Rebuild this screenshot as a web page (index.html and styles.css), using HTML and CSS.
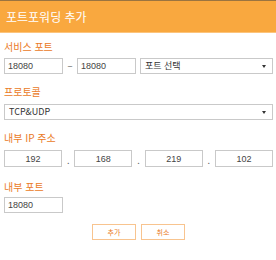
FILE: index.html
```html
<!DOCTYPE html>
<html lang="ko">
<head>
    <meta charset="utf-8"/>
    <title>포트포워딩 추가</title>
    <link rel="stylesheet" href="styles.css">
</head>
<body>
<div class="popup">
    <div class="popup-head">포트포워딩 추가</div>

    <div class="popup-body">
        <div class="label first">서비스 포트</div>
        <div class="row">
            <input class="field port" type="text" value="18080">
            <span class="dash">−</span>
            <input class="field port" type="text" value="18080">
            <div class="select grow">포트 선택<span class="arrow"></span></div>
        </div>

        <div class="label">프로토콜</div>
        <div class="row">
            <div class="select grow">TCP&amp;UDP<span class="arrow"></span></div>
        </div>

        <div class="label">내부 IP 주소</div>
        <div class="row ip">
            <input class="field octet" type="text" value="192">
            <span class="dot">.</span>
            <input class="field octet" type="text" value="168">
            <span class="dot">.</span>
            <input class="field octet" type="text" value="219">
            <span class="dot">.</span>
            <input class="field octet" type="text" value="102">
        </div>

        <div class="label last">내부 포트</div>
        <div class="row">
            <input class="field port" type="text" value="18080">
        </div>

        <div class="buttons">
            <span class="btn">추가</span>
            <span class="btn">취소</span>
        </div>
    </div>
</div>
</body>
</html>
```

FILE: styles.css
```css
body{
    margin: 0;
    padding: 0;
    background: #fff;
    font-family: "Noto Sans CJK KR", "Noto Sans", sans-serif;
}

.popup-head {
    height: 31px;
    border-top: 1px solid #9b7440;
    border-bottom: 1px solid #fcc47c;
    background-color: #f9a83f;
    color: #fff;
    font-size: 12px;
    line-height: 31px;
    padding-left: 6px;
}

.popup-body {
    padding: 0 3px 0 4px;
}

.label {
    color: #ea7a26;
    font-size: 10px;
    line-height: 12px;
    margin-top: 12px;
    margin-bottom: 6px;
}

.label.first {
    margin-top: 8px;
    margin-bottom: 5px;
}

.label.last {
    margin-top: 14px;
    margin-bottom: 4px;
}

.row {
    display: flex;
    align-items: center;
    height: 16px;
}

.field {
    box-sizing: border-box;
    height: 16px;
    border: 1px solid #c9c9c9;
    padding: 0 3px;
    margin: 0;
    font-family: "Liberation Sans", sans-serif;
    font-size: 9px;
    color: #444;
    outline: none;
}

.port {
    width: 59px;
}

.dash {
    width: 14px;
    text-align: center;
    color: #666;
    font-size: 9px;
}

.select {
    box-sizing: border-box;
    height: 16px;
    border: 1px solid #c9c9c9;
    padding: 0 4px;
    font-size: 9px;
    line-height: 14px;
    color: #333;
    position: relative;
}

.grow {
    flex: 1;
}

.row .grow {
    margin-left: 4px;
}

.row .grow:first-child {
    margin-left: 0;
}

.arrow {
    position: absolute;
    right: 6px;
    top: 6px;
    border-left: 2px solid transparent;
    border-right: 2px solid transparent;
    border-top: 3px solid #333;
}

.ip {
    justify-content: space-between;
    height: 17px;
}

.ip .field {
    height: 17px;
}

.octet {
    width: 58px;
    text-align: center;
}

.dot {
    font-size: 9px;
    color: #666;
    padding-top: 4px;
}

.buttons {
    display: flex;
    justify-content: center;
    gap: 5px;
    margin-top: 11px;
}

.btn {
    box-sizing: border-box;
    width: 44px;
    height: 16px;
    border: 1px solid #f8c48f;
    color: #ea7a26;
    font-size: 7px;
    line-height: 14px;
    text-align: center;
}
```
